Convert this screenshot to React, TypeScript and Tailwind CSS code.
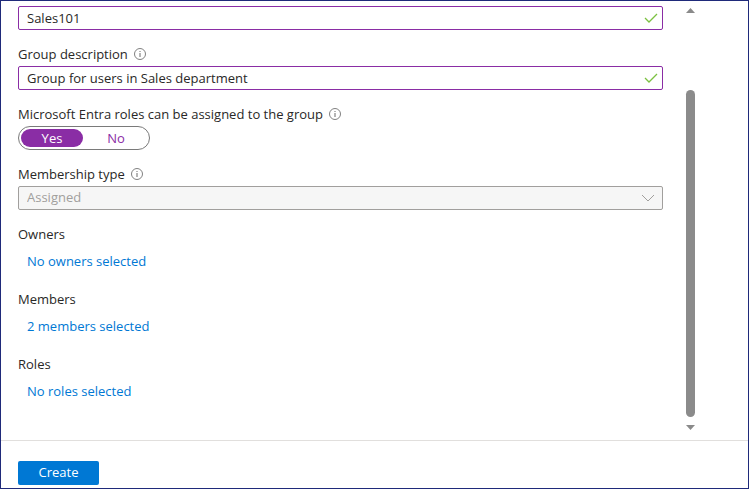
import { useState } from "react";

function InfoIcon() {
  return (
    <svg viewBox="0 0 12 12" className="size-3 shrink-0" fill="none" aria-hidden="true">
      <circle cx="6" cy="6" r="5.5" stroke="#808080" />
      <path d="M6 5v4" stroke="#b5b5b5" strokeWidth="2" />
      <path d="M6 3v1" stroke="#b5b5b5" strokeWidth="2" />
    </svg>
  );
}

function TextField({ id, label, value, info }: { id: string; label?: string; value: string; info?: boolean }) {
  const [text, setText] = useState(value);
  return (
    <div className="flex flex-col gap-0.5">
      {label && (
        <div className="flex items-center gap-1.5">
          <label htmlFor={id} className="leading-5">{label}</label>
          {info && <InfoIcon />}
        </div>
      )}
      <div className="flex h-6 items-center rounded-xs border border-[#8a2da5] bg-white pr-1">
        <input
          id={id}
          type="text"
          aria-label={label ? undefined : "Group name"}
          value={text}
          onChange={(e) => setText(e.target.value)}
          className="h-full min-w-0 flex-1 bg-transparent px-2 outline-none"
        />
        <svg viewBox="0 0 14 12" className="h-3 w-3.5 shrink-0" fill="none" aria-hidden="true">
          <path d="M1 6l4 4 8-8" stroke="#7cc142" strokeWidth="1.3" />
        </svg>
      </div>
    </div>
  );
}

function Picker({ title, link }: { title: string; link: string }) {
  return (
    <section className="flex flex-col gap-[7px]">
      <h2 className="leading-5">{title}</h2>
      <a href="#" className="self-start pl-[9px] leading-5 text-[#0078d4]">{link}</a>
    </section>
  );
}

function RoleToggle() {
  const [choice, setChoice] = useState("Yes");
  return (
    <fieldset>
      <legend className="mb-0.5 flex items-center gap-1.5 leading-5">
        Microsoft Entra roles can be assigned to the group
        <InfoIcon />
      </legend>
      <div className="grid h-6 w-33 grid-cols-2 gap-0.5 rounded-full border border-[#7a7a7a] p-0.5">
        {["Yes", "No"].map((option) => (
          <label
            key={option}
            className="flex items-center justify-center rounded-full leading-4 text-[#8a2da5] has-checked:bg-[#8a2da5] has-checked:text-white"
          >
            <input
              type="radio"
              name="assignable"
              value={option}
              checked={choice === option}
              onChange={() => setChoice(option)}
              className="sr-only"
            />
            {option}
          </label>
        ))}
      </div>
    </fieldset>
  );
}

export default function App() {
  return (
    <div className="flex min-h-screen flex-col border border-[#1f2a7a] bg-white font-['Open_Sans','Noto_Sans',sans-serif] text-[13px] text-[#292827]">
      <div className="flex flex-1 pr-[53px] pl-[17px]">
        <main className="flex min-w-0 flex-1 flex-col gap-3.5 pt-[5px]">
          <TextField id="name" value="Sales101" />
          <TextField id="description" label="Group description" value="Group for users in Sales department" info />
          <RoleToggle />
          <div className="flex flex-col gap-0.5">
            <div className="flex items-center gap-1.5">
              <label htmlFor="membership" className="leading-5">Membership type</label>
              <InfoIcon />
            </div>
            <div className="grid h-6 items-center">
              <select
                id="membership"
                disabled
                className="col-start-1 row-start-1 h-6 w-full appearance-none rounded-xs border border-[#a19f9d] bg-[#f6f6f6] px-2 text-[#a19f9d] opacity-100"
              >
                <option>Assigned</option>
              </select>
              <svg
                viewBox="0 0 14 8"
                className="pointer-events-none col-start-1 row-start-1 mr-2 h-2 w-3.5 justify-self-end"
                fill="none"
                aria-hidden="true"
              >
                <path d="M1 1l6 6 6-6" stroke="#a19f9d" />
              </svg>
            </div>
          </div>
          <div className="flex flex-col gap-[18px]">
            <Picker title="Owners" link="No owners selected" />
            <Picker title="Members" link="2 members selected" />
            <Picker title="Roles" link="No roles selected" />
          </div>
        </main>
        <div className="ml-[23px] flex w-[9px] flex-col items-center pt-[7px] pb-2.5" aria-hidden="true">
          <svg viewBox="0 0 9 5" className="h-[5px] w-[9px] shrink-0">
            <path d="M0 5L4.500 0L9 5z" fill="#8a8a8a" />
          </svg>
          <div className="mt-[77px] mb-2 w-full flex-1 rounded-full bg-[#8b8b8b]" />
          <svg viewBox="0 0 9 5" className="h-[5px] w-[9px] shrink-0">
            <path d="M0 0L4.500 5L9 0z" fill="#8a8a8a" />
          </svg>
        </div>
      </div>
      <footer className="border-t border-[#e1dfdd] px-[17px] pt-5 pb-[3px]">
        <button type="button" className="block h-6 w-[81px] rounded-xs bg-[#0078d4] text-white">
          Create
        </button>
      </footer>
    </div>
  );
}
